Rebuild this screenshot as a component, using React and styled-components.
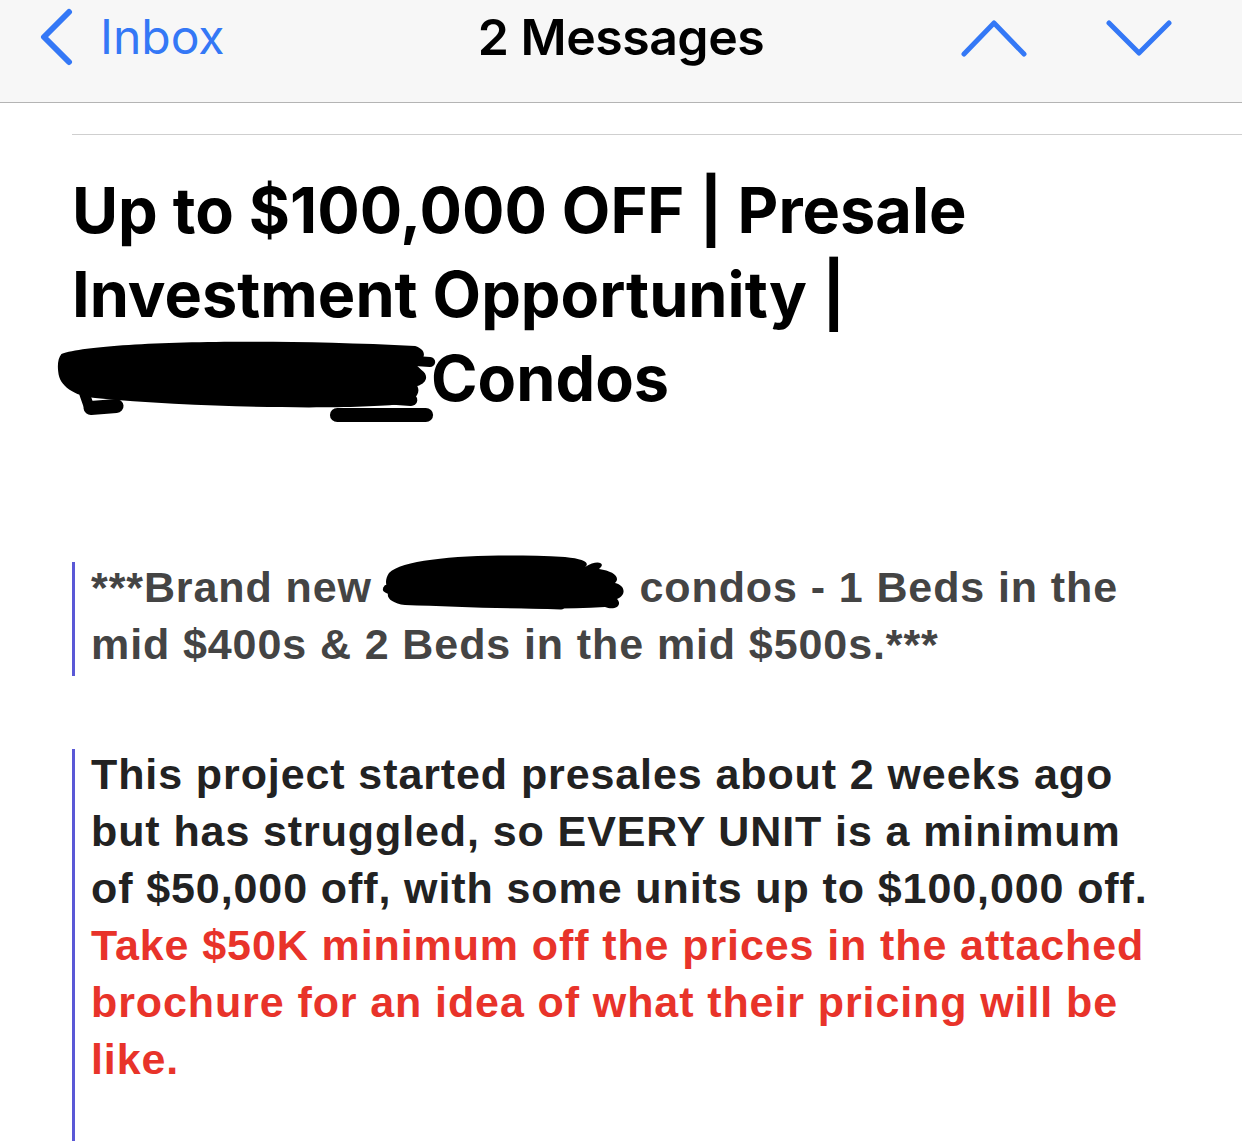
import React from "react";
import styled, { createGlobalStyle } from "styled-components";

const GlobalStyle = createGlobalStyle`
  html, body {
    margin: 0;
    padding: 0;
    background: #ffffff;
  }
  body {
    font-family: "Inter", "Noto Sans", sans-serif;
  }
`;

const Page = styled.div`
  width: 1242px;
  height: 1141px;
  overflow: hidden;
  background: #fff;
`;

const NavBar = styled.div`
  height: 103px;
  background: #f7f7f7;
  border-bottom: 1px solid #b4b4b4;
  display: grid;
  grid-template-columns: 1fr auto 1fr;
  align-items: start;
  padding-top: 8px;
  box-sizing: border-box;
`;

const BackButton = styled.div`
  display: flex;
  align-items: center;
  gap: 26px;
  padding-left: 38px;
  color: #3478f6;
  font-size: 48px;
  font-weight: 400;
  line-height: 58px;
`;

const NavTitle = styled.div`
  font-size: 50px;
  font-weight: 600;
  line-height: 58px;
  color: #000;
  letter-spacing: -0.5px;
`;

const Arrows = styled.div`
  display: flex;
  justify-content: flex-end;
  gap: 79px;
  padding-right: 70px;
  padding-top: 10px;
`;

const Content = styled.div`
  padding-left: 72px;
  padding-top: 31px;
`;

const Rule = styled.div`
  height: 1px;
  background: #cfcfcf;
`;

const Subject = styled.h1`
  margin: 33px 0 0 0;
  max-width: 1100px;
  font-family: "Inter", sans-serif;
  font-weight: 700;
  font-size: 63px;
  line-height: 84px;
  letter-spacing: 0;
  color: #000;
`;

const NoWrap = styled.span`
  white-space: nowrap;
`;

const Quote = styled.div`
  border-left: 3px solid #5a58d6;
  padding-left: 16px;
  margin-top: ${(p) => p.$top}px;
  padding-bottom: ${(p) => p.$bottom || 0}px;
  font-family: "Liberation Sans", Arial, sans-serif;
  font-weight: 700;
  font-size: 43px;
  line-height: 57px;
  letter-spacing: 0.9px;
  color: ${(p) => p.$color || "#222"};
`;

const QuoteText = styled.div`
  max-width: 1070px;
  position: relative;
  top: -3px;
`;

const Red = styled.div`
  color: #e8332a;
`;

const Redact = styled.svg`
  display: inline-block;
  vertical-align: top;
  overflow: visible;
`;

const Chevron = ({ d, w, h }) => (
  <svg width={w} height={h} viewBox={`0 0 ${w} ${h}`}>
    <path d={d} fill="none" stroke="#3478f6" strokeWidth="5" strokeLinecap="round" strokeLinejoin="round" />
  </svg>
);

export default function App() {
  return (
    <Page>
      <GlobalStyle />
      <NavBar>
        <BackButton>
          <svg width="36" height="58" viewBox="0 0 36 58">
            <path d="M31 4 L6 29 L31 54" fill="none" stroke="#3478f6" strokeWidth="6" strokeLinecap="round" strokeLinejoin="round" />
          </svg>
          Inbox
        </BackButton>
        <NavTitle>2 Messages</NavTitle>
        <Arrows>
          <Chevron w={66} h={40} d="M3 36 L33 5 L63 36" />
          <Chevron w={66} h={40} d="M3 5 L33 35 L63 5" />
        </Arrows>
      </NavBar>
      <Content>
        <Rule />
        <Subject>
          Up to $100,000 OFF | Presale Investment Opportunity |{" "}
          <NoWrap>
            <Redact
              width="378"
              height="84"
              viewBox="0 0 359 84"
              preserveAspectRatio="none"
              style={{ marginLeft: -19 }}
            >
              <path
                d="M8,18 C40,6 190,2 344,10 C356,14 354,24 344,28 L350,34 C358,40 354,48 346,50 C350,58 342,66 332,68 C280,74 140,72 40,62 C20,60 6,50 5,36 C4,28 5,22 8,18 Z"
                fill="#000"
              />
              <g stroke="#000" strokeLinecap="round" fill="none">
                <line x1="36" y1="72" x2="60" y2="70" strokeWidth="14" />
                <line x1="270" y1="79" x2="354" y2="79" strokeWidth="14" />
                <line x1="30" y1="58" x2="34" y2="70" strokeWidth="10" />
                <line x1="286" y1="60" x2="340" y2="64" strokeWidth="12" />
                <line x1="330" y1="24" x2="358" y2="26" strokeWidth="10" />
              </g>
            </Redact>
            Condos
          </NoWrap>
        </Subject>
        <Quote $top={142} $color="#444">
          <QuoteText>
            ***Brand new{" "}
            <Redact width="242" height="57" viewBox="0 0 242 57">
              <path
                d="M4,14 C20,-2 100,-6 180,-2 C200,0 205,4 200,8 C212,0 222,4 214,10 C228,12 236,18 230,24 C240,26 242,36 232,40 C238,46 230,52 220,48 C160,52 80,48 20,46 C6,44 0,38 4,32 C0,26 0,20 4,14 Z"
                fill="#000"
              />
              <g stroke="#000" strokeLinecap="round">
                <line x1="2" y1="30" x2="10" y2="34" strokeWidth="8" />
                <line x1="120" y1="44" x2="176" y2="46" strokeWidth="9" />
              </g>
            </Redact>{" "}
            condos - 1 Beds in the mid $400s &amp; 2 Beds in the mid $500s.***
          </QuoteText>
        </Quote>
        <Quote $top={73} $bottom={60}>
          <QuoteText>
            This project started presales about 2 weeks ago but has struggled, so EVERY UNIT is a
            minimum of $50,000 off, with some units up to $100,000 off.
            <Red>
              Take $50K minimum off the prices in the attached brochure for an idea of what their
              pricing will be like.
            </Red>
          </QuoteText>
        </Quote>
      </Content>
    </Page>
  );
}
